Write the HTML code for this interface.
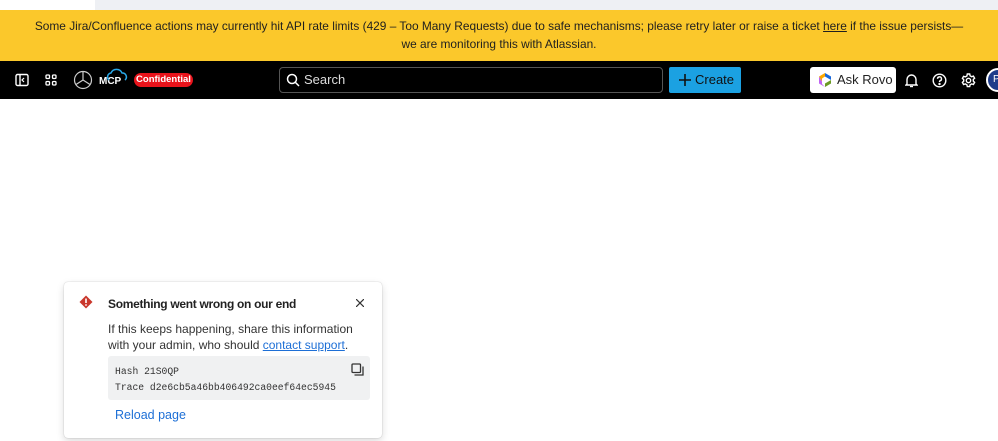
<!DOCTYPE html>
<html><head><meta charset="utf-8"><style>
*{box-sizing:border-box;margin:0;padding:0}
body{width:998px;height:441px;overflow:hidden;background:#fff;font-family:"Liberation Sans",sans-serif;position:relative}
.top{position:absolute;left:0;top:0;width:998px;height:10px;background:#eef0f4}
.top:before{content:"";position:absolute;left:0;top:0;width:95px;height:10px;background:#fff}
.banner{position:absolute;left:0;top:10px;width:998px;height:51px;background:#fbc82b;color:#1f1f1f;font-size:11.9px;text-align:center;line-height:18px;padding-top:7px}
.banner a{color:#1f1f1f;text-decoration:underline}
.nav{position:absolute;left:0;top:61px;width:998px;height:38px;background:#000}
.abs{position:absolute}
.conf{left:134px;top:12px;width:59px;height:14px;background:#e8131b;border-radius:7px;color:#fff;font-size:9.5px;font-weight:bold;line-height:14px;text-align:center}
.search{left:279px;top:6px;width:384px;height:26px;border:1px solid #555;border-radius:4px;color:#ddd;font-size:13px;line-height:24px;padding-left:24px}
.create{left:669px;top:6px;width:72px;height:26px;background:#1ba1e2;border-radius:2px;color:#111;font-size:13px;line-height:26px;padding-left:26px}
.rovo{left:810px;top:6px;width:86px;height:26px;background:#fff;border-radius:3px;color:#222;font-size:13px;line-height:26px;padding-left:27px}
.card{left:64px;top:282px;width:318px;height:156px;background:#fff;border-radius:4px;box-shadow:0 0 1px rgba(0,0,0,.3),0 3px 8px rgba(0,0,0,.15)}
.t{left:44px;top:15px;font-size:12px;font-weight:bold;color:#222;letter-spacing:-0.3px}
.b{left:44px;top:39px;font-size:12px;color:#333;line-height:16px}
.b a{color:#1d6fd6;text-decoration:underline}
.code{left:44px;top:74px;width:262px;height:44px;background:#f0f1f2;border-radius:3px;font-family:"Liberation Mono",monospace;font-size:9.7px;color:#333;padding:8px 0 0 7px;line-height:16px}
.rl{left:51px;top:126px;font-size:12.5px;color:#1d6fd6}
</style></head><body>
<div class="top"></div>
<div class="banner">Some Jira/Confluence actions may currently hit API rate limits (429 – Too Many Requests) due to safe mechanisms; please retry later or raise a ticket <a>here</a> if the issue persists—<br>we are monitoring this with Atlassian.</div>
<div class="nav">
<svg class="abs" style="left:15px;top:12px" width="14" height="14" viewBox="0 0 14 14"><rect x="1" y="1.5" width="12" height="11" rx="1.5" fill="none" stroke="#fff" stroke-width="1.4"/><path d="M5 2v10" stroke="#fff" stroke-width="1.4"/><path d="M9 5l-2 2 2 2" fill="none" stroke="#fff" stroke-width="1.2"/></svg>
<svg class="abs" style="left:45px;top:13px" width="12" height="12" viewBox="0 0 12 12" fill="none" stroke="#fff" stroke-width="1.3"><rect x="1" y="1" width="3.5" height="3.5" rx="1"/><rect x="7.5" y="1" width="3.5" height="3.5" rx="1"/><rect x="1" y="7.5" width="3.5" height="3.5" rx="1"/><rect x="7.5" y="7.5" width="3.5" height="3.5" rx="1"/></svg>
<svg class="abs" style="left:73px;top:9px" width="20" height="20" viewBox="0 0 20 20" fill="none" stroke="#ccc" stroke-width="1.2"><circle cx="10" cy="10" r="8.5"/><path d="M10 1.5V10L3 14.5M10 10l7 4.5"/></svg>
<div class="abs" style="left:99px;top:15px;color:#fff;font-size:10px;font-weight:bold">MCP</div>
<svg class="abs" style="left:106px;top:7px" width="22" height="14" viewBox="0 0 22 14" fill="none" stroke="#29a8e8" stroke-width="1.5"><path d="M3 12a4 4 0 0 1 2-7 6 6 0 0 1 11 0 4 4 0 0 1 3 7"/></svg>
<div class="abs conf">Confidential</div>
<div class="abs search">Search</div>
<svg class="abs" style="left:286px;top:12px" width="14" height="14" viewBox="0 0 14 14" fill="none" stroke="#fff" stroke-width="1.5"><circle cx="6" cy="6" r="4.5"/><path d="M9.5 9.5L13 13"/></svg>
<div class="abs create">Create</div>
<svg class="abs" style="left:678px;top:12px" width="14" height="14" viewBox="0 0 14 14" stroke="#111" stroke-width="1.6"><path d="M7 1v12M1 7h12"/></svg>
<div class="abs rovo">Ask Rovo</div>
<svg class="abs" style="left:819px;top:12px" width="12" height="14" viewBox="0 0 12 14"><path d="M6 0L12 3.5V7L6 3.5Z" fill="#1868db"/><path d="M12 7v3.5L6 14V10.5Z" fill="#6a9a23"/><path d="M0 3.5L6 0v3.5L3 5.5v3Z" fill="#fca700"/><path d="M0 10.5V3.5l3 5v2.5L6 14Z" fill="#bf63f3"/></svg>
<svg class="abs" style="left:905px;top:12px" width="13" height="15" viewBox="0 0 13 15" fill="none" stroke="#fff" stroke-width="1.4"><path d="M2 11V6.5a4.5 4.5 0 0 1 9 0V11l1 1H1z"/><path d="M5 13.5h3"/></svg>
<svg class="abs" style="left:932px;top:12px" width="15" height="15" viewBox="0 0 15 15" fill="none" stroke="#fff" stroke-width="1.4"><circle cx="7.5" cy="7.5" r="6.3"/><path d="M5.5 5.8a2 2 0 1 1 2.5 2c-.5.2-.5.6-.5 1.2"/><circle cx="7.5" cy="11" r=".5" fill="#fff"/></svg>
<svg class="abs" style="left:961px;top:12px" width="15" height="15" viewBox="0 0 15 15" fill="none" stroke="#fff" stroke-width="1.4"><circle cx="7.5" cy="7.5" r="2.2"/><path d="M6.3 1h2.4l.4 1.8 1.6.9 1.7-.6 1.2 2.1-1.3 1.2v1.8l1.3 1.2-1.2 2.1-1.7-.6-1.6.9-.4 1.8H6.3l-.4-1.8-1.6-.9-1.7.6-1.2-2.1 1.3-1.2V6.6L1.4 5.4l1.2-2.1 1.7.6 1.6-.9z"/></svg>
<div class="abs" style="left:986px;top:7px;width:24px;height:24px;border-radius:50%;background:#1d3b8a;border:2px solid #fff;color:#fff;font-size:10px;line-height:20px;padding-left:5px">P</div>
</div>
<div class="abs card">
<svg class="abs" style="left:15px;top:13px" width="14" height="14" viewBox="0 0 14 14"><path d="M7 0.5L13.5 7 7 13.5 0.5 7Z" fill="#c9372c"/><path d="M7 3.5v4.5" stroke="#fff" stroke-width="1.6"/><circle cx="7" cy="10" r=".9" fill="#fff"/></svg>
<div class="abs t">Something went wrong on our end</div>
<svg class="abs" style="left:292px;top:17px" width="8" height="8" viewBox="0 0 8 8" stroke="#333" stroke-width="1.2"><path d="M0 0l8 8M8 0L0 8"/></svg>
<div class="abs b">If this keeps happening, share this information<br>with your admin, who should <a>contact support</a>.</div>
<div class="abs code">Hash 21S0QP<br>Trace d2e6cb5a46bb406492ca0eef64ec5945</div>
<svg class="abs" style="left:287px;top:81px" width="13" height="13" viewBox="0 0 13 13" fill="none" stroke="#333" stroke-width="1.3"><rect x="1" y="1" width="8.5" height="8.5" rx="1"/><path d="M3.5 12h8.5V3.5"/></svg>
<div class="abs rl">Reload page</div>
</div>
</body></html>
